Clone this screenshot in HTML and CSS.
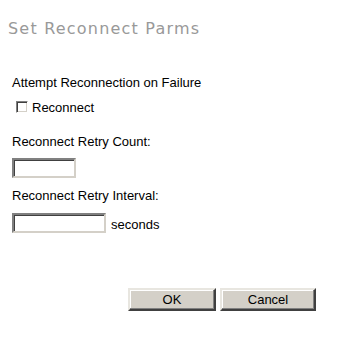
FILE: index.html
```html
<!DOCTYPE html>
<html>
<head>
<meta charset="utf-8">
<link rel="stylesheet" href="styles.css">
</head>
<body>
<div class="page">
  <h1 class="title">Set Reconnect Parms</h1>
  <div class="section">
    <div class="label">Attempt Reconnection on Failure</div>
    <label class="check-row"><span class="checkbox"></span><span>Reconnect</span></label>
  </div>
  <div class="field first">
    <div class="label">Reconnect Retry Count:</div>
    <div class="input-row"><span class="input short"></span></div>
  </div>
  <div class="field second">
    <div class="label">Reconnect Retry Interval:</div>
    <div class="input-row gap9"><span class="input long"></span><span class="unit">seconds</span></div>
  </div>
  <div class="buttons">
    <span class="btn ok">OK</span>
    <span class="btn cancel">Cancel</span>
  </div>
</div>
</body>
</html>
```
FILE: styles.css
```css
html, body { margin: 0; padding: 0; background: #fff; }
body { width: 337px; height: 340px; overflow: hidden; font-family: "Liberation Sans", Arial, sans-serif; font-size: 13px; color: #000; }
.page { padding: 0 0 0 12px; }
.title { margin: 0 0 0 -4px; padding-top: 19px; font-family: "DejaVu Sans", Verdana, sans-serif; font-weight: normal; font-size: 16px; letter-spacing: 1.2px; line-height: 20px; height: 20px; color: #999; }
.section { margin-top: 36px; }
.label { line-height: 16px; height: 16px; }
.check-row { display: flex; align-items: flex-start; margin-top: 9px; margin-left: 4px; height: 16px; line-height: 16px; }
.checkbox { box-sizing: border-box; width: 12px; height: 12px; margin-top: 1px; border: 1px solid; border-color: #808080 #fff #fff #808080; box-shadow: inset 1px 1px 0 #404040, inset -1px -1px 0 #d4d0c8; margin-right: 4px; background: #fff; }
.field.first { margin-top: 18px; }
.field.second { margin-top: 10px; }
.input-row { display: flex; align-items: flex-end; margin-top: 8px; }
.input-row.gap9 { margin-top: 9px; }
.input { display: block; box-sizing: border-box; height: 20px; border: 2px solid; border-color: #808080 #d4d0c8 #d4d0c8 #808080; box-shadow: inset 1px 1px 0 #404040; background: #fff; }
.input.short { width: 64px; }
.input.long { width: 94px; }
.unit { margin-left: 5px; line-height: 16px; }
.buttons { display: flex; gap: 4px; margin-top: 55px; padding-left: 116px; }
.btn { display: flex; align-items: center; justify-content: center; box-sizing: border-box; height: 23px; border: 2px solid; border-color: #e8e6e0 #404040 #404040 #e8e6e0; box-shadow: inset -1px -1px 0 #808080, inset 1px 1px 0 #fff; background: #d4d0c8; font-size: 13px; }
.btn.ok { width: 88px; }
.btn.cancel { width: 96px; }
```
